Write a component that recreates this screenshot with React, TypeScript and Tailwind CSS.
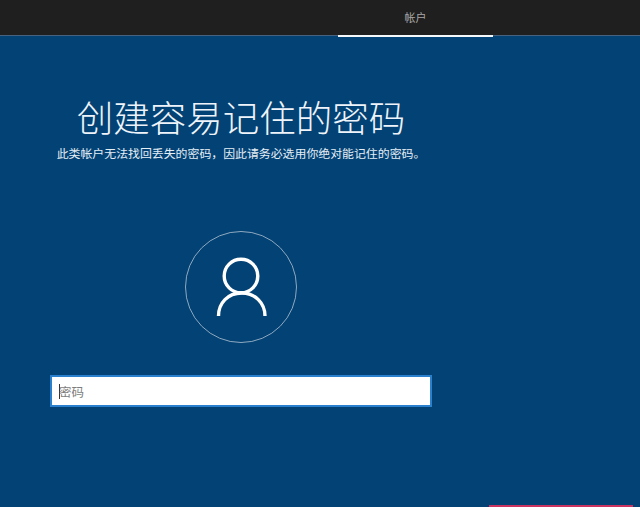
export default function App() {
  const font = { fontFamily: '"Noto Sans CJK SC", "Noto Sans", sans-serif' };
  return (
    <div className="relative w-[640px] h-[507px] overflow-hidden bg-[#024275] flex flex-col" style={font}>
      <div className="h-[36px] shrink-0 bg-[#1f1f1f] border-b border-[#47617f] flex">
        <div className="ml-[338px] w-[155px] h-[37px] border-b-2 border-[#f4f8fb] flex justify-center pt-[10px]">
          <span className="text-[11px] leading-[15px] text-[#a8a8a8]">帐户</span>
        </div>
      </div>
      <div className="w-[482px] flex flex-col items-center">
        <h1 className="mt-[56px] h-[50px] text-[36.5px] leading-[50px] font-light text-[#eef4f9] whitespace-nowrap">创建容易记住的密码</h1>
        <p className="mt-[2px] h-[18px] text-[11.9px] leading-[18px] text-[#e6eef5] whitespace-nowrap">此类帐户无法找回丢失的密码，因此请务必选用你绝对能记住的密码。</p>
        <div className="mt-[69px] w-[112px] h-[112px] rounded-full border border-[#8fa9c0] flex items-center justify-center">
          <svg width="56" height="60" viewBox="0 0 56 60" fill="none" stroke="#ffffff" strokeWidth="3.4">
            <circle cx="28" cy="19" r="16.8" />
            <path d="M5.5 59 C5.5 46 15 36 28.5 36 C42 36 52 46 52 59" />
          </svg>
        </div>
        <div className="mt-[32px] w-[382px] h-[32px] bg-white border-2 border-[#2a80cc] flex items-center pl-[7px]">
          <span className="w-px h-[15px] bg-[#333333]" />
          <span className="-ml-px text-[12.5px] text-[#7d7d7d] leading-[15px]">密码</span>
        </div>
      </div>
      <div className="absolute left-[489px] bottom-0 w-[144px] h-[2px] bg-[#c8335f]" />
    </div>
  );
}
